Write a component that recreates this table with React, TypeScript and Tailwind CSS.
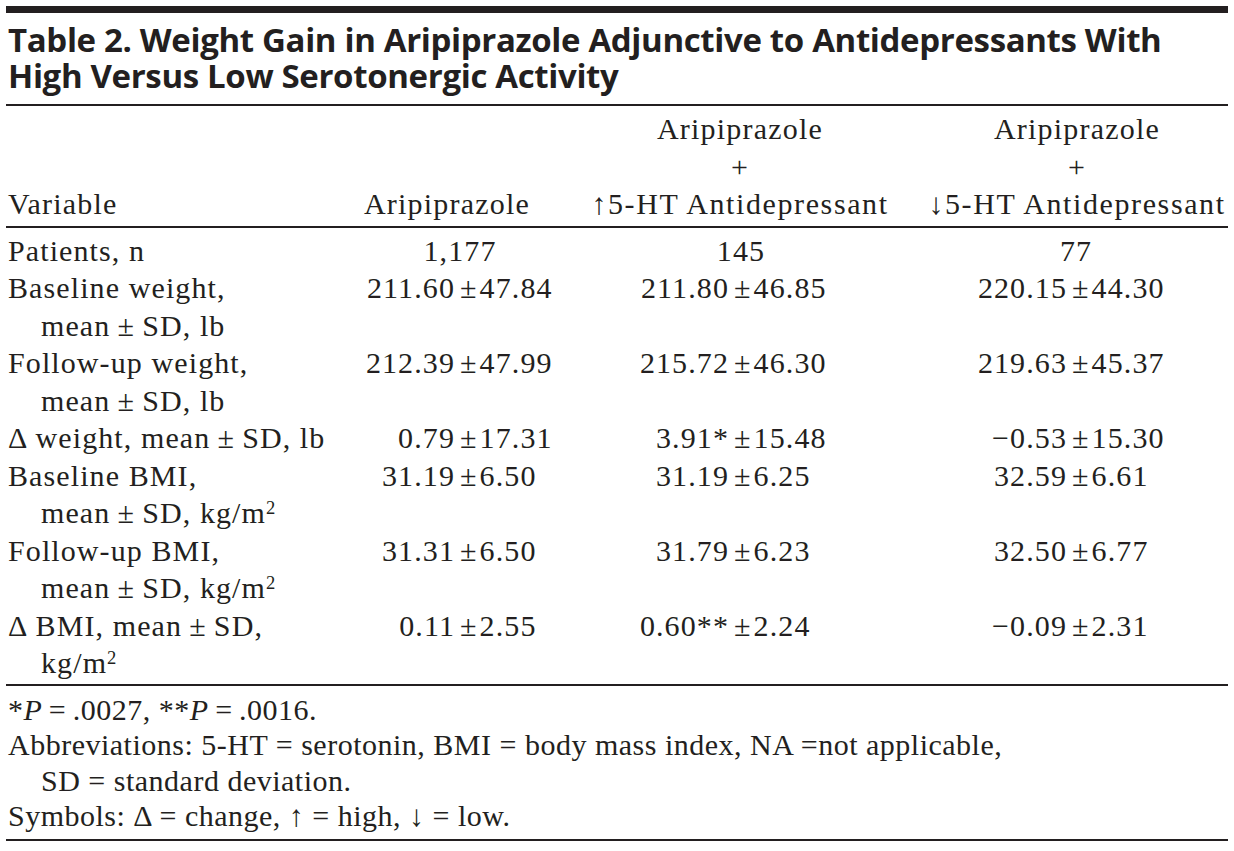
import React from "react"

type Row = {
    label: React.ReactNode[]
    values: [React.ReactNode, React.ReactNode][]
}

const Sq = () => <sup className="text-[0.62em]">2</sup>

// thin spaces round the plus-minus sign, as in the printed table
const PM = "\u2009±\u2009"

const rows: Row[] = [
    {
        label: ["Baseline weight,", <>mean{PM}SD, lb</>],
        values: [
            ["211.60", "47.84"],
            ["211.80", "46.85"],
            ["220.15", "44.30"],
        ],
    },
    {
        label: ["Follow-up weight,", <>mean{PM}SD, lb</>],
        values: [
            ["212.39", "47.99"],
            ["215.72", "46.30"],
            ["219.63", "45.37"],
        ],
    },
    {
        label: [<>Δ{"\u2009"}weight, mean{PM}SD, lb</>],
        values: [
            ["0.79", "17.31"],
            ["3.91*", "15.48"],
            ["−0.53", "15.30"],
        ],
    },
    {
        label: ["Baseline BMI,", <>mean{PM}SD, kg/m<Sq /></>],
        values: [
            ["31.19", "6.50"],
            ["31.19", "6.25"],
            ["32.59", "6.61"],
        ],
    },
    {
        label: ["Follow-up BMI,", <>mean{PM}SD, kg/m<Sq /></>],
        values: [
            ["31.31", "6.50"],
            ["31.79", "6.23"],
            ["32.50", "6.77"],
        ],
    },
    {
        label: [<>Δ{"\u2009"}BMI, mean{PM}SD,</>, <>kg/m<Sq /></>],
        values: [
            ["0.11", "2.55"],
            ["0.60**", "2.24"],
            ["−0.09", "2.31"],
        ],
    },
]

const Value = ({ left, right }: { left: React.ReactNode; right: React.ReactNode }) => (
    <div className="flex whitespace-nowrap">
        <span className="w-[106px] text-right">{left}</span>
        <span className="ml-[5px] mr-[2px]">±</span>
        <span>{right}</span>
    </div>
)

const Rule = ({ className = "" }: { className?: string }) => (
    <div className={`h-[2px] bg-[#231f20] ${className}`} />
)

export default function App() {
    return (
        <div className="w-[1234px] h-[851px] bg-white text-[#231f20] px-[6px] pt-[6px] overflow-hidden">
            <div className="h-[7px] bg-[#231f20]" />
            <h1 className="mt-[9px] pl-[2px] font-['Open_Sans',sans-serif] font-bold text-[33px] leading-[36px] tracking-[-0.35px]">
                <div>Table 2. Weight Gain in Aripiprazole Adjunctive to Antidepressants With</div>
                <div>High Versus Low Serotonergic Activity</div>
            </h1>
            <Rule className="mt-[10px]" />

            <div className="pl-[2px] font-['Liberation_Serif',serif] text-[30px] leading-[37.5px] tracking-[1.2px]">
                <div className="grid grid-cols-[341px_274px_338px_1fr] pt-[4px] pb-[3px]">
                    <div className="flex flex-col justify-end">Variable</div>
                    <div className="flex flex-col justify-end">
                        <div className="w-[196px] flex justify-center whitespace-nowrap">Aripiprazole</div>
                    </div>
                    <div className="w-[234px] flex flex-col items-center whitespace-nowrap">
                        <div>Aripiprazole</div>
                        <div>+</div>
                        <div className="tracking-[1.6px]">↑5-HT Antidepressant</div>
                    </div>
                    <div className="w-[232px] flex flex-col items-center whitespace-nowrap">
                        <div>Aripiprazole</div>
                        <div>+</div>
                        <div className="tracking-[1.6px]">↓5-HT Antidepressant</div>
                    </div>
                </div>
            </div>
            <Rule />

            <div className="pl-[2px] pt-[4px] pb-[2px] font-['Liberation_Serif',serif] text-[30px] leading-[37.5px] tracking-[1.1px]">
                <div className="grid grid-cols-[341px_274px_338px_1fr]">
                    <div>Patients, n</div>
                    <div className="w-[222px] flex justify-center">1,177</div>
                    <div className="w-[236px] flex justify-center">145</div>
                    <div className="w-[230px] flex justify-center">77</div>
                </div>
                {rows.map((row, i) => (
                    <div key={i} className="grid grid-cols-[341px_274px_338px_1fr]">
                        <div className="whitespace-nowrap">
                            {row.label.map((line, j) => (
                                <div key={j} className={j > 0 ? "pl-[33px]" : ""}>
                                    {line}
                                </div>
                            ))}
                        </div>
                        {row.values.map(([l, r], k) => (
                            <Value key={k} left={l} right={r} />
                        ))}
                    </div>
                ))}
            </div>
            <Rule />

            <div className="pl-[2px] pt-[6px] pb-[5px] font-['Liberation_Serif',serif] text-[30px] leading-[35.5px] tracking-[0.5px]">
                <div>
                    *<i>P</i>{"\u2009"}={"\u2009"}.0027, **<i>P</i>{"\u2009"}={"\u2009"}.0016.
                </div>
                <div>Abbreviations: 5-HT = serotonin, BMI = body mass index, NA =not applicable,</div>
                <div className="pl-[33px]">SD = standard deviation.</div>
                <div>Symbols: Δ = change, ↑ = high, ↓ = low.</div>
            </div>
            <Rule />
        </div>
    )
}
